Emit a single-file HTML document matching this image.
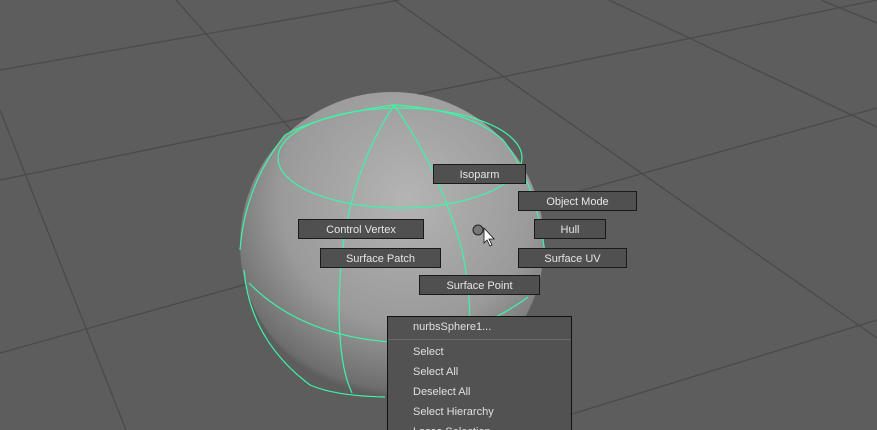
<!DOCTYPE html>
<html style="width:877px;height:430px;overflow:hidden"><head><style>
body{margin:0;width:877px;height:430px;overflow:hidden;background:#5d5d5d;font-family:"Liberation Sans",sans-serif;position:relative}
.b{position:absolute;height:18px;background:#505050;border:1px solid #1a1a1a;color:#e6e6e6;font-size:11px;line-height:20px;text-align:center;box-sizing:content-box}
.m{position:absolute;left:387px;top:316px;width:183px;height:120px;background:#525252;border:1px solid #111;color:#e0e0e0;font-size:11px;overflow:hidden}
.m div{position:absolute;left:25px}
</style></head><body>
<svg width="877" height="430" style="position:absolute;left:0;top:0">
<defs>
<radialGradient id="g" cx="0.55" cy="0.35" r="0.7">
<stop offset="0" stop-color="#b4b4b4"/><stop offset="0.6" stop-color="#9a9a9a"/><stop offset="0.9" stop-color="#6e6e6e"/><stop offset="1" stop-color="#3e3e3e"/>
</radialGradient>
</defs>
<g stroke="#4a4a4a" stroke-width="1.3" fill="none">
<line x1="176" y1="0" x2="300" y2="140"/>
<line x1="394" y1="0" x2="877" y2="338"/>
<line x1="609" y1="0" x2="877" y2="127"/>
<line x1="821" y1="0" x2="877" y2="23"/>
<line x1="0" y1="70" x2="400" y2="0"/>
<line x1="0" y1="180" x2="877" y2="0"/>
<line x1="0" y1="353" x2="877" y2="108"/>
<line x1="0" y1="110" x2="126" y2="430"/>
<line x1="877" y1="320" x2="520" y2="430"/>
</g>
<circle cx="392" cy="244" r="152" fill="url(#g)"/>
<g stroke="#3df5a6" stroke-width="1.2" fill="none">
<ellipse cx="400" cy="158" rx="122" ry="50"/>
<path d="M249 283 Q300 335 390 342 Q470 340 528 297"/>
<path d="M394 105 Q345 180 340 280 Q336 360 352 393"/>
<path d="M394 105 Q440 170 462 250 Q472 300 469 330"/>
<path d="M394 105 Q320 115 285 135 Q245 185 240 250"/>
<path d="M394 105 Q470 110 503 140 Q535 180 545 253"/>
<path d="M244 270 Q250 340 310 385 Q335 396 385 397"/>
</g>
<circle cx="478" cy="230" r="5" fill="#777" stroke="#222"/>
<path d="M484 228 L484 243 L487 240 L490 246 L492 245 L489 239 L494 239 Z" fill="#fff" stroke="#111" stroke-width="0.8"/>
</svg>
<div class="b" style="left:433px;top:164px;width:91px">Isoparm</div>
<div class="b" style="left:518px;top:191px;width:117px">Object Mode</div>
<div class="b" style="left:298px;top:219px;width:124px">Control Vertex</div>
<div class="b" style="left:534px;top:219px;width:70px">Hull</div>
<div class="b" style="left:320px;top:248px;width:119px">Surface Patch</div>
<div class="b" style="left:518px;top:248px;width:107px">Surface UV</div>
<div class="b" style="left:419px;top:275px;width:119px">Surface Point</div>
<div class="m">
<div style="top:4px">nurbsSphere1...</div>
<div style="left:0;top:22px;width:183px;height:1px;background:#6a6a6a"></div>
<div style="top:29px">Select</div>
<div style="top:49px">Select All</div>
<div style="top:69px">Deselect All</div>
<div style="top:89px">Select Hierarchy</div>
<div style="top:109px">Lasso Selection</div>
</div>
</body></html>
